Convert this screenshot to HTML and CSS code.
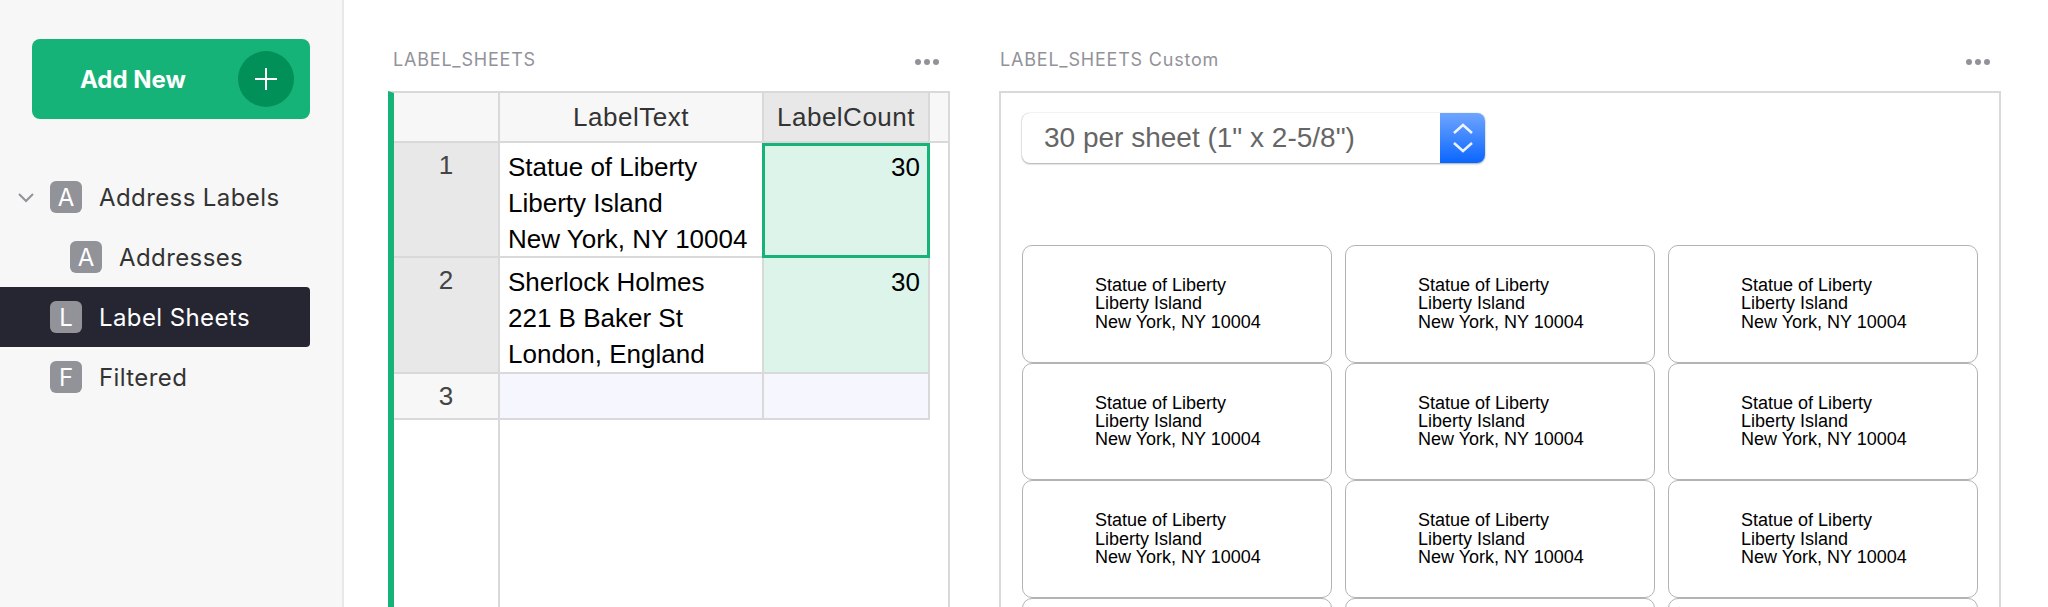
FILE: index.html
```html
<!DOCTYPE html>
<html lang="en">
<head>
  <meta charset="UTF-8" />
  <title>Address Labels - Label Sheets</title>
  <link rel="stylesheet" href="styles.css">
</head>
<body>

  <aside class="sidebar">
    <button class="add-new" type="button">
      <span>Add New</span>
      <span class="add-circle">
        <svg width="24" height="24" viewBox="0 0 24 24"><path d="M12 1v22M1 12h22" stroke="#fff" stroke-width="2" fill="none"/></svg>
      </span>
    </button>

    <nav class="pages">
      <a class="page">
        <svg class="chevron" width="18" height="12" viewBox="0 0 18 12"><path d="M2 2l7 7 7-7" stroke="#929299" stroke-width="2" fill="none"/></svg>
        <span class="page-icon">A</span>Address Labels
      </a>
      <a class="page page-sub"><span class="page-icon">A</span>Addresses</a>
      <a class="page page-active"><span class="page-icon">L</span>Label Sheets</a>
      <a class="page"><span class="page-icon">F</span>Filtered</a>
    </nav>
  </aside>

  <main class="main">
    <section class="panel panel-table">
      <header class="panel-head">
        <span class="panel-title">LABEL_SHEETS</span>
        <span class="dots"><i></i><i></i><i></i></span>
      </header>
      <div class="sheet">
        <div class="sheet-grid">
          <div class="cell head"></div>
          <div class="cell head">LabelText</div>
          <div class="cell head head-selected">LabelCount</div>
          <div class="cell head head-rest"></div>

          <div class="cell num num-selected">1</div>
          <div class="cell text">Statue of Liberty<br>Liberty Island<br>New York, NY 10004</div>
          <div class="cell count cell-cursor">30</div>

          <div class="cell num num-selected">2</div>
          <div class="cell text">Sherlock Holmes<br>221 B Baker St<br>London, England</div>
          <div class="cell count">30</div>

          <div class="cell num">3</div>
          <div class="cell new-row"></div>
          <div class="cell new-row"></div>
        </div>
        <div class="gutter"></div>
      </div>
    </section>

    <section class="panel panel-custom">
      <header class="panel-head">
        <span class="panel-title">LABEL_SHEETS Custom</span>
        <span class="dots"><i></i><i></i><i></i></span>
      </header>
      <div class="custom-box">
        <div class="select">
          <span class="select-text">30 per sheet (1" x 2-5/8")</span>
          <span class="select-arrows">
            <svg width="22" height="36" viewBox="0 0 22 36"><path d="M2 13l9-8 9 8M2 23l9 8 9-8" stroke="#fff" stroke-width="2.5" fill="none" opacity=".9"/></svg>
          </span>
        </div>
        <div class="labels">
          <div class="label">Statue of Liberty<br>Liberty Island<br>New York, NY 10004</div>
          <div class="label">Statue of Liberty<br>Liberty Island<br>New York, NY 10004</div>
          <div class="label">Statue of Liberty<br>Liberty Island<br>New York, NY 10004</div>
          <div class="label">Statue of Liberty<br>Liberty Island<br>New York, NY 10004</div>
          <div class="label">Statue of Liberty<br>Liberty Island<br>New York, NY 10004</div>
          <div class="label">Statue of Liberty<br>Liberty Island<br>New York, NY 10004</div>
          <div class="label">Statue of Liberty<br>Liberty Island<br>New York, NY 10004</div>
          <div class="label">Statue of Liberty<br>Liberty Island<br>New York, NY 10004</div>
          <div class="label">Statue of Liberty<br>Liberty Island<br>New York, NY 10004</div>
          <div class="label">Statue of Liberty<br>Liberty Island<br>New York, NY 10004</div>
          <div class="label">Statue of Liberty<br>Liberty Island<br>New York, NY 10004</div>
          <div class="label">Statue of Liberty<br>Liberty Island<br>New York, NY 10004</div>
        </div>
      </div>
    </section>
  </main>

</body>
</html>
```

FILE: styles.css
```css
html, body {
  height: 100%;
}
body {
  margin: 0;
  display: flex;
  height: 607px;
  overflow: hidden;
  background: #fff;
  font-family: "Liberation Sans", Arial, sans-serif;
}

/* sidebar */
.sidebar {
  box-sizing: border-box;
  width: 344px;
  flex: none;
  padding-top: 39px;
  background: #f7f7f7;
  border-right: 2px solid #e8e8e8;
}
.add-new {
  display: flex;
  align-items: center;
  box-sizing: border-box;
  width: 278px;
  height: 80px;
  margin-left: 32px;
  padding: 0 16px 0 48px;
  justify-content: space-between;
  border: none;
  border-radius: 8px;
  background: #16b378;
  color: #fff;
  font-family: Inter, sans-serif;
  font-size: 24px;
  font-weight: 700;
}
.add-circle {
  display: flex;
  align-items: center;
  justify-content: center;
  width: 56px;
  height: 56px;
  border-radius: 50%;
  background: #009058;
}
.pages {
  margin-top: 48px;
}
.page {
  position: relative;
  display: flex;
  align-items: center;
  width: 310px;
  height: 60px;
  padding-left: 50px;
  box-sizing: border-box;
  color: #333;
  font-family: Inter, sans-serif;
  font-size: 24px;
  letter-spacing: .4px;
}
.page-sub {
  padding-left: 70px;
}
.page-active {
  background: #262633;
  color: #fff;
  border-radius: 0 4px 4px 0;
}
.page-icon {
  display: flex;
  align-items: center;
  justify-content: center;
  width: 32px;
  height: 32px;
  margin-right: 17px;
  border-radius: 6px;
  background: #929299;
  color: #fff;
  letter-spacing: 0;
}
.chevron {
  position: absolute;
  left: 17px;
  top: 25px;
}

/* panels */
.main {
  display: flex;
  flex: 1;
  gap: 49px;
  padding-left: 44px;
  padding-right: 49px;
}
.panel {
  display: flex;
  flex-direction: column;
}
.panel-table {
  width: 562px;
  flex: none;
}
.panel-custom {
  flex: 1;
}
.panel-head {
  display: flex;
  align-items: center;
  justify-content: space-between;
  box-sizing: border-box;
  height: 91px;
  padding: 28px 11px 0 5px;
}
.panel-custom .panel-head {
  padding-left: 1px;
}
.panel-title {
  color: #929299;
  font-family: Inter, sans-serif;
  font-size: 18px;
  letter-spacing: .8px;
}
.dots {
  display: flex;
  gap: 3px;
  margin-top: 4px;
}
.dots i {
  width: 6px;
  height: 6px;
  border-radius: 50%;
  background: #929299;
}

/* data table */
.sheet {
  flex: 1;
  display: flex;
  flex-direction: column;
  border-top: 2px solid #d9d9d9;
  border-right: 2px solid #d9d9d9;
  border-left: 6px solid #16b378;
}
.sheet-grid {
  display: grid;
  grid-template-columns: 106px 264px 166px 1fr;
  grid-template-rows: 50px 115px 116px 46px;
  font-size: 26px;
  line-height: 36px;
}
.cell {
  box-sizing: border-box;
  border-right: 2px solid #d9d9d9;
  border-bottom: 2px solid #d9d9d9;
  color: #000;
}
.head {
  display: flex;
  align-items: center;
  justify-content: center;
  background: #f7f7f7;
  color: #333;
  letter-spacing: .5px;
}
.head-selected {
  background: #e8e8e8;
}
.head-rest {
  border-right: none;
}
.num {
  grid-column: 1;
  padding-top: 4px;
  text-align: center;
  background: #f7f7f7;
  color: #444;
}
.num-selected {
  background: #e8e8e8;
}
.text {
  padding: 6px 8px 0;
  white-space: nowrap;
}
.count {
  padding: 6px 8px 0;
  text-align: right;
  background: #dcf4ea;
}
.cell-cursor {
  position: relative;
}
.cell-cursor::after {
  content: "";
  position: absolute;
  top: 0;
  right: -2px;
  bottom: -2px;
  left: -2px;
  border: 3px solid #16b378;
}
.new-row {
  background: #f5f6fe;
}
.gutter {
  flex: 1;
  box-sizing: border-box;
  width: 106px;
  border-right: 2px solid #d9d9d9;
}

/* custom widget */
.custom-box {
  flex: 1;
  box-sizing: border-box;
  border: 2px solid #d9d9d9;
  border-bottom: none;
  padding: 20px 21px 0;
  overflow: hidden;
}
.select {
  display: flex;
  align-items: center;
  justify-content: space-between;
  box-sizing: border-box;
  width: 463px;
  height: 50px;
  padding-left: 22px;
  border-radius: 8px;
  background: #fff;
  box-shadow: 0 0 1px #aaa, 0 1px 2px #aaa;
  color: #666;
  font-size: 28px;
}
.select-arrows {
  display: flex;
  align-items: center;
  justify-content: center;
  width: 45px;
  height: 100%;
  border-radius: 0 8px 8px 0;
  background: linear-gradient(#6fa5ff, #0a66ff);
}
.labels {
  display: grid;
  grid-template-columns: repeat(3, 310px);
  grid-auto-rows: 117.6px;
  column-gap: 13px;
  margin-top: 82px;
}
.label {
  box-sizing: border-box;
  padding: 30px 0 0 72px;
  border: 1.5px solid #b3b3b3;
  border-radius: 10px;
  color: #000;
  font-size: 18px;
  line-height: 18.4px;
}
```
